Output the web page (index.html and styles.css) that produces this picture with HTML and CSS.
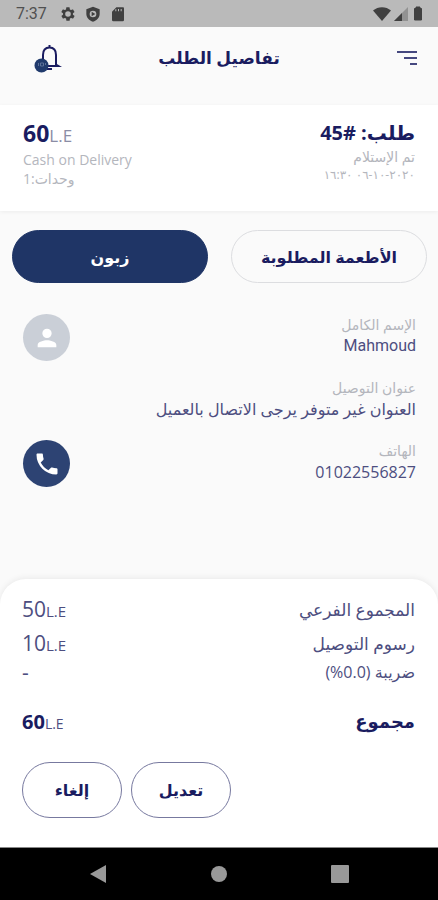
FILE: index.html
```html
<!DOCTYPE html>
<html lang="ar" dir="rtl">
<head>
<meta charset="utf-8">
<meta name="viewport" content="width=device-width, initial-scale=1">
<title>تفاصيل الطلب</title>
<link rel="stylesheet" href="styles.css">
</head>
<body>
<div class="status" dir="ltr">
  <div class="status-group">
    <span class="clock">7:37</span>
    <svg width="16" height="16" viewBox="0 0 24 24"><path fill-rule="evenodd" d="M19.400 13a7.500 7.500 0 0 0 0-2l2.100-1.600a.5.5 0 0 0 .1-.7l-2-3.400a.5.5 0 0 0-.6-.2l-2.500 1a7.300 7.300 0 0 0-1.700-1L14.400 2.400a.5.5 0 0 0-.5-.4h-4a.5.5 0 0 0-.5.4L9 5.100a7.300 7.300 0 0 0-1.700 1l-2.500-1a.5.5 0 0 0-.6.2l-2 3.400a.5.5 0 0 0 .1.700L4.500 11a7.500 7.500 0 0 0 0 2l-2.100 1.600a.5.5 0 0 0-.1.700l2 3.400c.1.200.4.300.6.200l2.500-1a7.300 7.300 0 0 0 1.700 1l.4 2.700c0 .2.200.4.500.4h4c.3 0 .5-.2.500-.4l.4-2.700a7.300 7.300 0 0 0 1.700-1l2.500 1c.2.100.5 0 .6-.2l2-3.400a.5.5 0 0 0-.1-.7zM12 16.200a4.200 4.200 0 1 1 0-8.400 4.200 4.200 0 0 1 0 8.400z"/></svg>
    <svg width="16" height="16" viewBox="0 0 24 24"><path fill-rule="evenodd" d="M12 1 2 5v7c0 5.500 4.300 9.800 10 11.500 5.700-1.700 10-6 10-11.500V5zM12 7a5 5 0 1 1 0 10 5 5 0 0 1 0-10zM10 8.500v7l5.500-3.500z"/></svg>
    <svg width="16" height="16" viewBox="0 0 24 24"><path fill-rule="evenodd" d="M20 2H9.500L3 8.500V21a2 2 0 0 0 2 2h14a2 2 0 0 0 2-2V4a2 2 0 0 0-1-2zM8 8h1.500V5H8zm4 0h1.500V4.500H12zm4 0h1.500V4.500H16z"/></svg>
  </div>
  <div class="status-group signals">
    <svg width="18" height="14" viewBox="0 0 18 14"><path d="M0 3.500C5-1 13-1 18 3.500L9 14z"/></svg>
    <svg width="14" height="14" viewBox="0 0 14 14"><path fill="#929292" d="M14 0v14H0z"/><path d="M8 6v8H0z"/></svg>
    <svg width="14" height="15" viewBox="0 0 14 15"><path d="M5 1h4v1.500h1.500V14h-7V2.500H5z" stroke="#404040" stroke-linejoin="round"/></svg>
  </div>
</div>

<header class="bar">
  <button class="menu" aria-label="القائمة">
    <svg width="22" height="16" viewBox="0 0 22 16" fill="none" stroke="#45487f" stroke-width="2"><path d="M1 2h20M8 8h13M14 14h7"/></svg>
  </button>
  <h1>تفاصيل الطلب</h1>
  <button class="bell" aria-label="الإشعارات">
    <svg width="28" height="30" viewBox="0 0 28 30"><path d="M9 22V12C9 7 11.500 4.500 15.500 4.500S22 7 22 12v9.500l2.500 1.500H9M15.500 5V2M13 26h5" fill="none" stroke="#1a1c60" stroke-width="2"/><circle cx="7.500" cy="22.500" r="7" fill="#203a6c"/><path d="M4.500 20v3M6.500 20h3v3h-3zM11.500 20v2" stroke="#5d7298" fill="none"/></svg>
  </button>
</header>

<main>
  <section class="summary">
    <div>
      <h2>طلب: <span dir="ltr">45#</span></h2>
      <p class="muted">تم الإستلام</p>
      <p class="muted date">٢٠٢٠-١٠-٠٦ ١٦:٣٠</p>
    </div>
    <div class="left">
      <p class="price" dir="ltr"><b>60</b><span>L.E</span></p>
      <p class="muted" dir="ltr">Cash on Delivery</p>
      <p class="muted">وحدات:1</p>
    </div>
  </section>

  <nav class="tabs">
    <button class="tab">الأطعمة المطلوبة</button>
    <button class="tab active">زبون</button>
  </nav>

  <section class="details">
    <div class="row">
      <div><p class="label">الإسم الكامل</p><p class="value name">Mahmoud</p></div>
      <span class="round avatar"><svg width="28" height="28" viewBox="0 0 24 24"><path fill="#fff" d="M12 12a4 4 0 1 0 0-8 4 4 0 0 0 0 8zm0 2c-2.700 0-8 1.300-8 4v2h16v-2c0-2.700-5.300-4-8-4z"/></svg></span>
    </div>
    <div class="row">
      <div><p class="label">عنوان التوصيل</p><p class="value">العنوان غير متوفر يرجى الاتصال بالعميل</p></div>
    </div>
    <div class="row">
      <div><p class="label">الهاتف</p><p class="value number">01022556827</p></div>
      <button class="round phone" aria-label="اتصال"><svg width="28" height="28" viewBox="0 0 24 24"><path fill="#fff" d="M6.600 10.800c1.400 2.800 3.800 5.100 6.600 6.600l2.200-2.200c.3-.3.700-.4 1-.2 1.100.4 2.300.6 3.600.6.600 0 1 .4 1 1V20c0 .6-.4 1-1 1A17 17 0 0 1 3 4c0-.6.400-1 1-1h3.500c.6 0 1 .4 1 1 0 1.200.2 2.400.6 3.600.1.300 0 .7-.3 1z"/></svg></button>
    </div>
  </section>
</main>

<section class="sheet">
  <dl>
    <div class="line"><dt>المجموع الفرعي</dt><dd dir="ltr"><b>50</b>L.E</dd></div>
    <div class="line"><dt>رسوم التوصيل</dt><dd dir="ltr"><b>10</b>L.E</dd></div>
    <div class="line tax"><dt>ضريبة <span dir="ltr">(%0.0)</span></dt><dd dir="ltr"><b>-</b></dd></div>
    <div class="line total"><dt>مجموع</dt><dd dir="ltr"><b>60</b>L.E</dd></div>
  </dl>
  <div class="actions">
    <button class="action">تعديل</button>
    <button class="action">إلغاء</button>
  </div>
</section>

<footer class="navbar" dir="ltr">
  <button aria-label="رجوع"><svg width="18" height="20" viewBox="0 0 18 20"><path d="M17 1v18L1 10z"/></svg></button>
  <button aria-label="الرئيسية"><svg width="18" height="20" viewBox="0 0 18 20"><circle cx="9" cy="10" r="8"/></svg></button>
  <button aria-label="التطبيقات"><svg width="18" height="20" viewBox="0 0 18 20"><rect y="1" width="18" height="18" rx="1"/></svg></button>
</footer>
</body>
</html>
```
FILE: styles.css
```css
* { box-sizing: border-box; }
body {
  margin: 0;
  min-height: 100vh;
  display: flex;
  flex-direction: column;
  background: #fafafa;
  color: #1a1c60;
  font-family: "Open Sans", "DejaVu Sans", sans-serif;
  font-size: 17px;
}
h1, h2, p, dl, dd { margin: 0; }
button { font: inherit; color: inherit; padding: 0; border: 0; background: none; }
svg { display: block; }

.status {
  display: flex;
  align-items: center;
  justify-content: space-between;
  height: 27px;
  padding: 0 13px 0 16px;
  background: #bababa;
  color: #505050;
  fill: #404040;
  font-family: Roboto, sans-serif;
  font-size: 16px;
}
.status-group { display: flex; align-items: center; gap: 9px; }
.clock { margin-right: 4px; }
.signals { gap: 3px; }

.bar {
  display: grid;
  grid-template-columns: 1fr auto 1fr;
  align-items: center;
  height: 78px;
  padding: 0 20px 16px;
}
h1 { font-size: 17px; line-height: 24px; }
.menu { justify-self: start; }
.bell { justify-self: end; margin-left: 14px; }

.summary {
  display: flex;
  justify-content: space-between;
  height: 106px;
  padding: 14px 23px;
  background: #fff;
  box-shadow: 0 1px 4px #0000000f;
}
h2, .price { line-height: 28px; }
h2 { font-size: 20px; }
.price { font-size: 23px; }
.price span { font-size: 17px; color: #8b8da5; }
.left { text-align: left; }
.muted { color: #b4b6bd; font-size: 14px; line-height: 19px; }
.date { font-size: 12px; line-height: 17px; }

.tabs { display: flex; gap: 23px; padding: 19px 11px 0 12px; }
.tab {
  flex: 1;
  height: 53px;
  border: 1px solid #dcdde0;
  border-radius: 27px;
  font-size: 16px;
  font-weight: bold;
}
.active { background: #1f3566; border-color: #1f3566; color: #fff; }

.details { display: flex; flex-direction: column; gap: 16px; padding: 31px 22px 0 23px; }
.row { display: flex; justify-content: space-between; min-height: 47px; }
.label { color: #b4b6bd; font-size: 14px; line-height: 22px; }
.value { color: #4d4e80; font-size: 16px; line-height: 20px; }
.name { font-family: Roboto, sans-serif; }
.round { display: grid; place-items: center; width: 47px; height: 47px; border-radius: 50%; }
.avatar { background: #cacfd7; }
.phone { background: #2d4373; }

.sheet {
  margin-top: auto;
  padding: 13px 23px 29px 22px;
  border-radius: 26px 26px 0 0;
  background: #fff;
  box-shadow: 0 -1px 6px #00000012;
}
.line { display: flex; justify-content: space-between; align-items: center; height: 34px; color: #4d4e80; }
.line dd { font-size: 15px; }
.line b { font-size: 21px; font-weight: normal; }
.tax { height: 24px; }
.tax dt { font-size: 16px; }
.total { height: 36px; margin-top: 19px; color: #1a1c60; }
.total dt, .total b { font-weight: bold; }
.total dt { font-size: 18px; }
.total dd { color: #4d4e80; font-size: 14px; }
.total b { color: #1a1c60; font-size: 20px; }
.actions { display: flex; justify-content: flex-end; gap: 9px; margin-top: 23px; }
.action {
  width: 100px;
  height: 56px;
  border: 1px solid #77799f;
  border-radius: 28px;
  font-size: 16px;
  font-weight: bold;
}

.navbar {
  display: flex;
  align-items: center;
  justify-content: space-between;
  height: 53px;
  padding: 0 89px;
  border-top: 1px solid #888;
  background: #000;
  fill: #999;
}
```
